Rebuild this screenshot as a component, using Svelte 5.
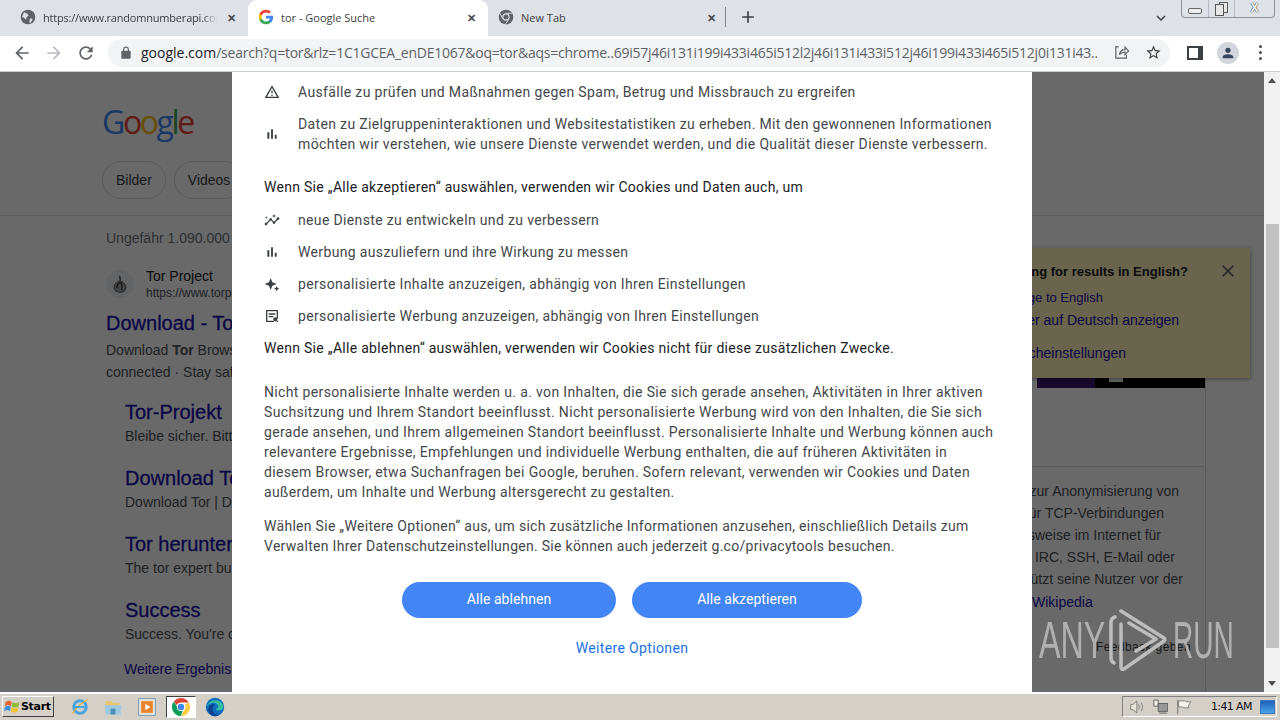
<script>
  const url = "/search?q=tor&rlz=1C1GCEA_enDE1067&oq=tor&aqs=chrome..69i57j46i131i199i433i465i512l2j46i131i433i512j46i199i433i465i512j0i131i43...";

  const moreRows = [
    { icon: "insights", text: "neue Dienste zu entwickeln und zu verbessern" },
    { icon: "bars", text: "Werbung auszuliefern und ihre Wirkung zu messen" },
    { icon: "spark", text: "personalisierte Inhalte anzuzeigen, abhängig von Ihren Einstellungen" },
    { icon: "ads", text: "personalisierte Werbung anzuzeigen, abhängig von Ihren Einstellungen" }
  ];

  const sitelinks = [
    { title: "Tor-Projekt", text: "Bleibe sicher. Bitte aktualisiere deinen Browser." },
    { title: "Download Tor", text: "Download Tor | Download for Windows" },
    { title: "Tor herunterladen", text: "The tor expert bundle for Windows" },
    { title: "Success", text: "Success. You're connected to the network." }
  ];

  // the panel text starts under the dialog, so each line is set by where it ends
  const panelLines = [
    { t: "Tor ist ein Netzwerk zur Anonymisierung von", end: 346 },
    { t: "Verbindungsdaten. Es wird für TCP-Verbindungen", end: 331 },
    { t: "eingesetzt, beispielsweise im Internet für", end: 328 },
    { t: "Browsing, Instant Messaging, IRC, SSH, E-Mail oder", end: 342 },
    { t: "P2P. Tor schützt seine Nutzer vor der", end: 350 }
  ];
</script>

{#snippet icon(name)}
  {#if name === "bars"}
    <svg class="ico" viewBox="0 0 24 24"><path d="M5 9.2h3V19H5zM10.6 5h2.8v14h-2.8zm5.6 8H19v6h-2.8z" /></svg>
  {:else if name === "warn"}
    <svg class="ico" viewBox="0 0 24 24"><path d="M1 21h22L12 2 1 21zm3.47-2L12 5.99 19.53 19H4.47zM11 16h2v2h-2zm0-6h2v4h-2z" /></svg>
  {:else if name === "insights"}
    <svg class="ico" viewBox="0 0 24 24"><path d="M21 8c-1.45 0-2.26 1.44-1.93 2.51l-3.55 3.56c-.3-.09-.74-.09-1.04 0l-2.55-2.55C12.27 10.45 11.46 9 10 9c-1.45 0-2.27 1.44-1.93 2.52l-4.56 4.55C2.44 15.74 1 16.55 1 18c0 1.1.9 2 2 2 1.45 0 2.26-1.44 1.93-2.51l4.55-4.56c.3.09.74.09 1.04 0l2.55 2.55C12.73 16.55 13.54 18 15 18c1.45 0 2.27-1.44 1.93-2.52l3.56-3.55c1.07.33 2.51-.48 2.51-1.93 0-1.1-.9-2-2-2zM15 9l.94-2.07L18 6l-2.06-.93L15 3l-.92 2.07L12 6l2.08.93zM3.5 11L4 9l2-.5L4 8l-.5-2L3 8l-2 .5L3 9z" /></svg>
  {:else if name === "spark"}
    <svg class="ico" viewBox="0 0 24 24"><path d="M10 3l2.5 6.5L19 12l-6.5 2.5L10 21l-2.5-6.5L1 12l6.5-2.5zM19 15l1.2 2.8L23 19l-2.8 1.2L19 23l-1.2-2.8L15 19l2.8-1.2z" /></svg>
  {:else}
    <svg class="ico" viewBox="0 0 24 24"><path d="M3 3h18v13h-2V5H5v14h10v2H3zM7 8h10v2H7zm0 4h7v2H7zm13.2 9.5l-2-2a3 3 0 1 1 1.3-1.3l2 2z" /></svg>
  {/if}
{/snippet}

{#snippet chrome(size)}
  <svg width={size} height={size} viewBox="0 0 24 24">
    <path fill="#db4437" d="M12 0a12 12 0 0 1 10.4 6H12a6 6 0 0 0-5.6 3.8L2.6 4.6A12 12 0 0 1 12 0z" />
    <path fill="#ffcd40" d="M22.4 6A12 12 0 0 1 12 24l4.6-8.2A6 6 0 0 0 17 8.5L22.4 6z" />
    <path fill="#0f9d58" d="M2.6 4.6l5 8.7a5 5 0 0 0 6.6 3.4L12 24A12 12 0 0 1 2.6 4.6z" />
    <circle cx="12" cy="12" r="5.4" fill="#fff" />
    <circle cx="12" cy="12" r="4.3" fill="#4285f4" />
  </svg>
{/snippet}

<div class="screen">
  <div class="tabstrip">
    <div class="tab">
      <svg class="fav" viewBox="0 0 24 24">
        <circle cx="12" cy="12" r="11" fill="#5f6368" />
        <path fill="#dee1e6" d="M6 5l5 2 2 3-3 2-1 4-3-3-3-1zM15 14l4 1-3 6-2-1z" />
      </svg>
      <span class="tab-title fade">https://www.randomnumberapi.com</span>
      <span class="tab-x">✕</span>
    </div>
    <div class="tab active">
      <svg class="fav" viewBox="0 0 24 24">
        <path fill="#4285F4" d="M22.56 12.25c0-.78-.07-1.53-.2-2.25H12v4.26h5.92c-.26 1.37-1.04 2.53-2.09 3.31v2.77h3.57c2.08-1.92 3.28-4.74 3.28-8.09z" />
        <path fill="#34A853" d="M12 23c2.97 0 5.46-.98 7.28-2.66l-3.57-2.77c-.98.66-2.23 1.06-3.71 1.06-2.86 0-5.29-1.93-6.16-4.53H2.18v2.84C3.99 20.53 7.7 23 12 23z" />
        <path fill="#FBBC05" d="M5.84 14.09c-.22-.66-.35-1.36-.35-2.09s.13-1.43.35-2.09V7.07H2.18C1.43 8.55 1 10.22 1 12s.43 3.45 1.18 4.93l2.85-2.22.81-.62z" />
        <path fill="#EA4335" d="M12 5.38c1.62 0 3.06.56 4.21 1.64l3.15-3.15C17.45 2.09 14.97 1 12 1 7.7 1 3.99 3.47 2.18 7.07l3.66 2.84c.87-2.6 3.3-4.53 6.16-4.53z" />
      </svg>
      <span class="tab-title">tor - Google Suche</span>
      <span class="tab-x">✕</span>
    </div>
    <div class="tab">
      <svg class="fav" viewBox="0 0 24 24">
        <circle cx="12" cy="12" r="11" fill="#5f6368" />
        <circle cx="12" cy="12" r="5.5" fill="#dee1e6" />
        <circle cx="12" cy="12" r="3.8" fill="#5f6368" />
        <path stroke="#dee1e6" stroke-width="1.4" d="M12 6.5h10M7 14.5L2.5 6M16.5 15L11 23" />
      </svg>
      <span class="tab-title">New Tab</span>
      <span class="tab-x">✕</span>
    </div>
    <span class="tab-sep"></span>
    <svg class="plus" viewBox="0 0 24 24"><path d="M19 13h-6v6h-2v-6H5v-2h6V5h2v6h6z" /></svg>
    <svg class="chev" viewBox="0 0 24 24"><path d="M7.41 8.59L12 13.17l4.59-4.58L18 10l-6 6-6-6z" /></svg>
    <div class="winbtns">
      <span class="wb min"><i></i></span>
      <span class="wb max"><i></i><b></b></span>
      <span class="wb close">X</span>
    </div>
  </div>

  <div class="toolbar">
    <svg class="tool" viewBox="0 0 24 24"><path d="M20 11H7.83l5.59-5.59L12 4l-8 8 8 8 1.41-1.41L7.83 13H20v-2z" /></svg>
    <svg class="tool off" viewBox="0 0 24 24"><path d="M4 11h12.17l-5.59-5.59L12 4l8 8-8 8-1.41-1.41L16.17 13H4v-2z" /></svg>
    <svg class="tool" viewBox="0 0 24 24"><path d="M17.65 6.35C16.2 4.9 14.21 4 12 4c-4.42 0-7.99 3.58-7.99 8s3.57 8 7.99 8c3.73 0 6.84-2.55 7.73-6h-2.08c-.82 2.33-3.04 4-5.65 4-3.31 0-6-2.69-6-6s2.69-6 6-6c1.66 0 3.14.69 4.22 1.78L13 11h7V4l-2.35 2.35z" /></svg>
    <div class="omnibox">
      <svg class="lock" viewBox="0 0 24 24"><path d="M18 8h-1V6c0-2.76-2.24-5-5-5S7 3.24 7 6v2H6c-1.1 0-2 .9-2 2v10c0 1.1.9 2 2 2h12c1.1 0 2-.9 2-2V10c0-1.1-.9-2-2-2zM9 6c0-1.66 1.34-3 3-3s3 1.34 3 3v2H9V6z" /></svg>
      <span class="url"><span class="host">google.com</span>{url}</span>
      <svg class="omni-ico share" viewBox="0 0 24 24"><path fill="none" stroke="#5f6368" stroke-width="1.7" d="M8 4H4v16h15v-5M9 15c1-5 4-7 8-7V4.5l5 5.5-5 5v-3.500c-3 0-6 1-8 3.500z" /></svg>
      <svg class="omni-ico star" viewBox="0 0 24 24"><path d="M22 9.24l-7.19-.62L12 2 9.19 8.63 2 9.24l5.46 4.73L5.82 21 12 17.27 18.18 21l-1.63-7.03L22 9.24zM12 15.4l-3.76 2.27 1-4.28-3.32-2.88 4.38-.38L12 6.1l1.71 4.04 4.38.38-3.32 2.88 1 4.28L12 15.4z" /></svg>
    </div>
    <span class="sidepanel"></span>
    <span class="avatar">
      <svg viewBox="0 0 24 24"><path d="M12 12a4 4 0 1 0 0-8 4 4 0 0 0 0 8zm0 2c-3 0-8 1.300-8 4v2h16v-2c0-2.700-5-4-8-4z" /></svg>
    </span>
    <span class="dots"><i></i><i></i><i></i></span>
  </div>

  <div class="page">
    <div class="doc">
      <header class="search-head">
        <div class="logo"><span class="b">G</span><span class="r">o</span><span class="y">o</span><span class="b">g</span><span class="g">l</span><span class="r">e</span></div>
        <nav class="chips">
          <span class="chip">Bilder</span>
          <span class="chip">Videos</span>
        </nav>
      </header>
      <div class="serp">
        <main class="results">
          <p class="count">Ungefähr 1.090.000 Ergebnisse</p>
          <div class="site">
            <span class="site-ico">
              <svg viewBox="0 0 24 24">
                <path fill="#a8a8a8" stroke="#333" d="M12 8c5 2 7 5 7 8 0 4-3 6-7 6s-7-2-7-6c0-3 2-6 7-8z" />
                <path fill="none" stroke="#333" stroke-width="1.500" d="M12 2c-1 2 1 3 0 6M12 10c-3 2-4 4-4 7M12 10c3 2 3 5 2 9" />
              </svg>
            </span>
            <div>
              <div class="site-name">Tor Project</div>
              <div class="site-url">https://www.torproject.org › download</div>
            </div>
          </div>
          <a class="title" href="#top">Download - Tor Project</a>
          <p class="desc">Download <b>Tor</b> Browser to experience real private browsing without tracking.<br />connected · Stay safe and private online with us.</p>
          <ul class="sitelinks">
            {#each sitelinks as s}
              <li>
                <a class="sl-title" href="#top">{s.title}</a>
                <div class="sl-text">{s.text}</div>
              </li>
            {/each}
          </ul>
          <a class="more" href="#top">Weitere Ergebnisse von torproject.org</a>
        </main>

        <aside class="panel">
          <div class="panel-img"><i></i><u></u></div>
          <div class="panel-gap"></div>
          <div class="panel-text">
            {#each panelLines as line}
              <div class="pline" style="width:{line.end}px">{line.t}</div>
            {/each}
            <a class="wiki" href="#top">Wikipedia</a>
          </div>
          <div class="feedback">Feedback geben</div>
        </aside>
      </div>

      <div class="lang-note">
        <div class="ln ln-head">Searching for results in English?</div>
        <div class="ln ln-a">Change to English</div>
        <div class="ln ln-b">Immer auf Deutsch anzeigen</div>
        <div class="ln ln-c">Spracheinstellungen</div>
        <svg class="ln-x" viewBox="0 0 24 24"><path d="M19 6.41L17.59 5 12 10.59 6.41 5 5 6.41 10.59 12 5 17.59 6.41 19 12 13.41 17.59 19 19 17.590 13.41 12z" /></svg>
      </div>

      <div class="scrim"></div>

      <div class="dialog">
        <div class="row">
          {@render icon("warn")}
          <span>Ausfälle zu prüfen und Maßnahmen gegen Spam, Betrug und Missbrauch zu ergreifen</span>
        </div>
        <div class="row">
          {@render icon("bars")}
          <span>Daten zu Zielgruppeninteraktionen und Websitestatistiken zu erheben. Mit den gewonnenen Informationen möchten wir verstehen, wie unsere Dienste verwendet werden, und die Qualität dieser Dienste verbessern.</span>
        </div>
        <p class="lead first">Wenn Sie „Alle akzeptieren“ auswählen, verwenden wir Cookies und Daten auch, um</p>
        {#each moreRows as r}
          <div class="row">
            {@render icon(r.icon)}
            <span>{r.text}</span>
          </div>
        {/each}
        <p class="lead">Wenn Sie „Alle ablehnen“ auswählen, verwenden wir Cookies nicht für diese zusätzlichen Zwecke.</p>
        <p class="para top">Nicht personalisierte Inhalte werden u. a. von Inhalten, die Sie sich gerade ansehen, Aktivitäten in Ihrer aktiven Suchsitzung und Ihrem Standort beeinflusst. Nicht personalisierte Werbung wird von den Inhalten, die Sie sich gerade ansehen, und Ihrem allgemeinen Standort beeinflusst. Personalisierte Inhalte und Werbung können auch relevantere Ergebnisse, Empfehlungen und individuelle Werbung enthalten, die auf früheren Aktivitäten in diesem Browser, etwa Suchanfragen bei Google, beruhen. Sofern relevant, verwenden wir Cookies und Daten außerdem, um Inhalte und Werbung altersgerecht zu gestalten.</p>
        <p class="para last">Wählen Sie „Weitere Optionen“ aus, um sich zusätzliche Informationen anzusehen, einschließlich Details zum Verwalten Ihrer Datenschutzeinstellungen. Sie können auch jederzeit g.co/privacytools besuchen.</p>
        <div class="actions">
          <button class="reject">Alle ablehnen</button>
          <button class="accept">Alle akzeptieren</button>
        </div>
        <a class="options" href="#top">Weitere Optionen</a>
      </div>

      <div class="watermark">
        <span class="wm-text">ANY</span>
        <svg class="wm-play" viewBox="0 0 58 62">
          <path fill="none" stroke="#bdbdbd" stroke-width="3.500" stroke-linejoin="round" stroke-linecap="round" d="M6 8C3 9 2 10 2 13v36c0 3 1 4 3 5M12 2l43 27c1 1 1 2 0 3L15 60c-2 1-3 0-3-2V15M20 14l27 16-20 12" />
        </svg>
        <span class="wm-text run">RUN</span>
      </div>
    </div>

    <div class="scrollbar">
      <span class="arr up"></span>
      <span class="thumb"></span>
      <span class="arr down"></span>
    </div>
  </div>

  <div class="taskbar">
    <button class="start">
      <svg viewBox="0 0 20 18" width="17" height="16">
        <path fill="#e8622c" d="M2 3c3-2 5-2 7 0L8 8C6 6 4 6 1 8z" />
        <path fill="#8dbb35" d="M10 3c3 2 5 2 8 0l-1 5c-3 2-5 2-8 0z" />
        <path fill="#3a8fd8" d="M1 9c3-2 5-2 7 0l-1 5c-2-2-4-2-7 0z" />
        <path fill="#f4c430" d="M9 9c3 2 5 2 8 0l-1 5c-3 2-5 2-8 0z" />
      </svg>
      Start
    </button>
    <div class="quick">
      <svg class="tb-ico" viewBox="0 0 24 24">
        <circle cx="12" cy="12" r="7.500" fill="none" stroke="#4aa3df" stroke-width="3.500" />
        <path fill="none" stroke="#e8b13a" stroke-width="1.500" d="M3 20C6 14 14 6 22 3" />
        <path stroke="#4aa3df" stroke-width="2.500" d="M6 12h13" />
      </svg>
      <svg class="tb-ico" viewBox="0 0 24 24">
        <path fill="#e7c66e" d="M3 5h7l2 2h8v4H3z" />
        <path fill="#9cc9e0" d="M2 10h20l-1 11H3z" />
        <path fill="#4d8fb5" d="M9 14h6v7H9z" />
      </svg>
      <svg class="tb-ico media" viewBox="0 0 24 24">
        <rect x="2" y="2" width="20" height="20" fill="#e8e4da" stroke="#6b8fb5" />
        <rect x="5" y="5" width="14" height="14" fill="#e8842c" />
        <path fill="#fff" d="M10 8l6 4-6 4z" />
      </svg>
      <span class="tb-active">{@render chrome(18)}</span>
      <svg class="tb-ico" viewBox="0 0 24 24">
        <circle cx="12" cy="12" r="11" fill="#0f6cbd" />
        <path fill="#35c1a0" d="M2 14c0-6 5-10 10-10 6 0 10 4 10 8 0 3-3 4-6 4-2 0-3-1-3-2 2 0 3-1 3-2 0-3-3-5-6-5-4 0-8 3-8 7z" />
        <path fill="#0b3f8a" d="M12 23c-5 0-8-4-8-8 0-4 4-7 8-6-2 1-3 3-3 6 0 4 3 7 9 6-2 1-4 2-6 2z" />
      </svg>
    </div>
    <div class="tray">
      <svg class="tray-ico" viewBox="0 0 18 16"><path fill="#e8e4da" stroke="#777" d="M2 5h3l4-4v14l-4-4H2z" /><path fill="none" stroke="#777" d="M11 5c1 2 1 4 0 6M14 3c2 3 2 7 0 10" /></svg>
      <svg class="tray-ico" viewBox="0 0 18 16"><path fill="#f2efe6" stroke="#555" d="M1 0h5v7H1z" /><path fill="#999" stroke="#555" d="M6 4h11v9H6z" /><path stroke="#555" d="M7 15h9" /></svg>
      <svg class="tray-ico" viewBox="0 0 18 16"><path stroke="#666" d="M2 0v16" /><path fill="#f5f3ea" stroke="#777" d="M3 1h7l2 1h5l-3 5 1 2H9L8 8H3z" /></svg>
      <span class="clock">1:41 AM</span>
      <span class="desk"></span>
    </div>
  </div>
</div>

<style>
  :global(body) {
    margin: 0;
    overflow: hidden;
  }
  .screen {
    width: 1280px;
    height: 720px;
    display: flex;
    flex-direction: column;
    overflow: hidden;
    font-family: "Liberation Sans", Arial, sans-serif;
  }

  /* tabs */
  .tabstrip {
    height: 36px;
    background: #dee1e6;
    display: flex;
    align-items: center;
    padding-left: 8px;
    position: relative;
    font-family: "Open Sans", sans-serif;
    font-size: 11px;
    color: #3c4043;
  }
  .tab {
    width: 240px;
    height: 36px;
    box-sizing: border-box;
    display: flex;
    align-items: center;
    padding: 0 9px 2px 10px;
    border-radius: 9px 9px 0 0;
  }
  .tab:first-child {
    padding-left: 12px;
  }
  .tab.active {
    background: #fff;
    color: #3c4043;
  }
  .fav {
    width: 16px;
    height: 16px;
    flex: none;
    margin-right: 7px;
  }
  .tab-title {
    flex: 1;
    white-space: nowrap;
    overflow: hidden;
  }
  .fade {
    letter-spacing: -0.2px;
    mask-image: linear-gradient(to left, transparent, #000 14px);
  }
  .tab-x {
    width: 16px;
    text-align: center;
    font-size: 11px;
    font-weight: 700;
    color: #45484c;
    margin-left: 6px;
  }
  .tab-sep {
    width: 1px;
    height: 20px;
    background: #80868b;
    margin-left: -3px;
    margin-top: -2px;
  }
  .plus {
    width: 20px;
    height: 20px;
    fill: #3c4043;
    margin-left: 12px;
    margin-top: -2px;
  }
  .chev {
    width: 18px;
    height: 18px;
    fill: #3c4043;
    margin-left: auto;
    margin-right: 110px;
  }
  .winbtns {
    position: absolute;
    top: 0;
    right: 5px;
    display: flex;
    height: 17px;
    border: 1px solid #8b8f96;
    border-top: none;
    border-radius: 0 0 4px 4px;
    background: #dee1e6;
  }
  .wb {
    position: relative;
    display: block;
    height: 17px;
    text-align: center;
    color: #f4f4f4;
    font: 700 12px "Liberation Sans", sans-serif;
    text-shadow: 0 0 1px #333, 0 0 1px #333;
    line-height: 16px;
  }
  .min {
    width: 26px;
    border-right: 1px solid #b6bac0;
  }
  .min i {
    position: absolute;
    left: 6px;
    top: 8px;
    width: 12px;
    height: 4px;
    border: 1px solid #666;
    border-radius: 2px;
    background: #eee;
  }
  .max {
    width: 25px;
    border-right: 1px solid #b6bac0;
  }
  .max i,
  .max b {
    position: absolute;
    border: 1px solid #555;
    background: #e6e6e6;
    display: block;
  }
  .max i {
    left: 10px;
    top: 2px;
    width: 7px;
    height: 9px;
  }
  .max b {
    left: 6px;
    top: 4px;
    width: 7px;
    height: 10px;
  }
  .close {
    width: 39px;
  }

  /* address row */
  .toolbar {
    height: 36px;
    box-sizing: border-box;
    background: #fff;
    border-bottom: 1px solid #c9cbcf;
    display: flex;
    align-items: center;
    padding: 0 0 2px 12px;
  }
  .tool {
    width: 20px;
    height: 20px;
    fill: #5f6368;
    margin-right: 12px;
  }
  .tool.off {
    fill: #b9bcc0;
  }
  .omnibox {
    width: 1062px;
    height: 28px;
    border-radius: 14px;
    background: #f1f3f4;
    display: flex;
    align-items: center;
    box-sizing: border-box;
    padding-left: 11px;
    font-family: "Open Sans", sans-serif;
    font-size: 14px;
    color: #5f6368;
  }
  .lock {
    width: 14px;
    height: 14px;
    fill: #5f6368;
    margin-right: 8px;
    flex: none;
  }
  .url {
    width: 956px;
    flex: none;
    white-space: nowrap;
    overflow: hidden;
    letter-spacing: -0.24px;
  }
  .host {
    color: #202124;
    letter-spacing: 0;
  }
  .omni-ico {
    width: 17px;
    height: 17px;
    flex: none;
  }
  .share {
    margin-left: 16px;
  }
  .star {
    margin-left: 15px;
    fill: #3c4043;
  }
  .sidepanel {
    width: 9px;
    height: 10px;
    border: 2px solid #3c4043;
    border-right-width: 5px;
    margin-left: 17px;
  }
  .avatar {
    width: 22px;
    height: 22px;
    border-radius: 50%;
    background: #d3d7dd;
    margin-left: 14px;
    overflow: hidden;
    display: flex;
    align-items: center;
    justify-content: center;
  }
  .avatar svg {
    width: 16px;
    height: 16px;
    fill: #35465e;
  }
  .dots {
    display: flex;
    flex-direction: column;
    gap: 3px;
    margin-left: 20px;
  }
  .dots i {
    width: 3px;
    height: 3px;
    border-radius: 50%;
    background: #4a4d51;
  }

  /* page under the dialog */
  .page {
    flex: 1;
    min-height: 0;
    display: flex;
  }
  .doc {
    flex: 1;
    position: relative;
    overflow: hidden;
    background: #fff;
    color: #202124;
  }
  .search-head {
    height: 144px;
    box-sizing: border-box;
    padding: 28px 0 0 102px;
    border-bottom: 1px solid #dfe1e5;
  }
  .logo {
    font: 400 32px/44px "Open Sans", sans-serif;
    letter-spacing: -2.4px;
    height: 44px;
  }
  .b { color: #4285f4; }
  .r { color: #ea4335; }
  .y { color: #fbbc05; }
  .g { color: #34a853; }
  .chips {
    display: flex;
    gap: 8px;
    margin-top: 17px;
  }
  .chip {
    height: 38px;
    box-sizing: border-box;
    padding: 0 13px;
    border: 1px solid #dadce0;
    border-radius: 19px;
    font-size: 14px;
    line-height: 36px;
    color: #3c4043;
  }
  .serp {
    display: flex;
    align-items: flex-start;
  }
  .results {
    width: 640px;
    flex: none;
    padding-left: 106px;
    box-sizing: content-box;
  }
  .count {
    margin: 13px 0 0;
    font-size: 14px;
    line-height: 18px;
    color: #70757a;
    white-space: nowrap;
  }
  .site {
    display: flex;
    align-items: center;
    gap: 12px;
    margin-top: 21px;
    height: 32px;
    font-size: 14px;
  }
  .site-ico {
    width: 28px;
    height: 28px;
    border-radius: 50%;
    background: #f1f3f4;
    display: flex;
    align-items: center;
    justify-content: center;
  }
  .site-ico svg {
    width: 20px;
    height: 20px;
  }
  .site-name {
    line-height: 18px;
  }
  .site-url {
    font-size: 12px;
    line-height: 16px;
    color: #4d5156;
    white-space: nowrap;
  }
  .title {
    display: block;
    margin-top: 10px;
    font-size: 20px;
    line-height: 26px;
    color: #1a0dab;
    text-decoration: none;
    white-space: nowrap;
    -webkit-text-stroke: 0.3px #1a0dab;
  }
  .desc {
    margin: 3px 0 0;
    font-size: 14px;
    line-height: 22px;
    color: #4d5156;
    white-space: nowrap;
  }
  .sitelinks {
    list-style: none;
    margin: 16px 0 0;
    padding: 0 0 0 19px;
  }
  .sitelinks li {
    height: 66px;
  }
  .sl-title {
    display: block;
    font-size: 20px;
    line-height: 26px;
    color: #1a0dab;
    text-decoration: none;
    white-space: nowrap;
    -webkit-text-stroke: 0.3px #1a0dab;
  }
  .sl-text {
    font-size: 14px;
    line-height: 22px;
    color: #4d5156;
    white-space: nowrap;
  }
  .more {
    display: block;
    margin: -4px 0 0 18px;
    font-size: 14px;
    line-height: 20px;
    color: #1a0dab;
    text-decoration: none;
    white-space: nowrap;
  }
  .panel {
    width: 372px;
    margin-left: 87px;
    height: 476px;
    margin-top: 32px;
    border-right: 1px solid #dadce0;
    flex: none;
    position: relative;
    box-sizing: content-box;
  }
  .panel-img {
    height: 140px;
    width: 168px;
    margin-left: auto;
    display: flex;
    background: #000;
    position: relative;
  }
  .panel-img i {
    width: 58px;
    background: #3a1470;
  }
  .panel-img u {
    position: absolute;
    left: 72px;
    bottom: 6px;
    width: 14px;
    height: 4px;
    background: #f4f4f4;
  }
  .panel-gap {
    height: 78px;
    border-bottom: 1px solid #dadce0;
  }
  .panel-text {
    padding-top: 13px;
    font-size: 14px;
    line-height: 22px;
    color: #4d5156;
  }
  .pline {
    text-align: right;
    white-space: nowrap;
  }
  .wiki {
    display: block;
    margin: 1px 0 0 199px;
    color: #1a0dab;
    text-decoration: none;
  }
  .feedback {
    position: absolute;
    right: 14px;
    top: 392px;
    font-size: 12px;
    letter-spacing: 0.4px;
    color: #3c4043;
    white-space: nowrap;
  }

  /* yellow language note sits on top of the panel */
  .lang-note {
    position: absolute;
    left: 880px;
    top: 176px;
    width: 370px;
    height: 130px;
    background: #fff4b8;
    box-shadow: 0 1px 4px rgba(0, 0, 0, 0.4);
    font-size: 14px;
    color: #1a0dab;
  }
  .ln {
    position: absolute;
    right: 0;
    white-space: nowrap;
  }
  .ln-head {
    top: 16px;
    right: 62px;
    font-size: 13px;
    font-weight: 700;
    color: #202124;
  }
  .ln-a {
    top: 42px;
    right: 147px;
    font-size: 13px;
  }
  .ln-b {
    top: 64px;
    right: 71px;
  }
  .ln-c {
    top: 97px;
    right: 124px;
  }
  .ln-x {
    position: absolute;
    right: 12px;
    top: 13px;
    width: 20px;
    height: 20px;
    fill: #5f6368;
  }

  .scrim {
    position: absolute;
    inset: 0;
    background: rgba(0, 0, 0, 0.59);
  }

  /* consent dialog */
  .dialog {
    position: absolute;
    left: 232px;
    top: 0;
    width: 800px;
    height: 620px;
    box-sizing: border-box;
    padding: 10px 32px 0;
    background: #fff;
    font-family: Roboto, sans-serif;
    font-size: 14px;
    line-height: 20px;
    letter-spacing: 0.35px;
    color: #44474a;
  }
  .row {
    display: flex;
    align-items: center;
    gap: 18px;
    margin-bottom: 12px;
  }
  .ico {
    width: 16px;
    height: 16px;
    flex: none;
    fill: #3c4043;
  }
  .lead {
    margin: 0 0 13px;
    color: #202124;
    letter-spacing: 0.29px;
  }
  .lead.first {
    margin-top: 23px;
  }
  .para {
    margin: 0 0 14px;
    padding-right: 4px;
  }
  .para.top {
    margin-top: 24px;
  }
  .para.last {
    letter-spacing: 0.29px;
  }
  .actions {
    display: flex;
    justify-content: center;
    gap: 16px;
    margin-top: 26px;
  }
  .actions button {
    height: 36px;
    border: none;
    border-radius: 18px;
    background: #4285f4;
    color: #fff;
    font: inherit;
    letter-spacing: 0.05px;
    padding: 0 0 2px;
  }
  .reject {
    width: 214px;
  }
  .accept {
    width: 230px;
  }
  .options {
    display: block;
    margin-top: 20px;
    text-align: center;
    color: #1a73e8;
    text-decoration: none;
  }

  /* sandbox watermark */
  .watermark {
    position: absolute;
    left: 1039px;
    top: 537px;
    display: flex;
    align-items: center;
    color: rgba(200, 200, 200, 0.75);
  }
  .wm-text {
    font: 400 52px/60px "Liberation Sans", sans-serif;
    display: block;
    width: 62px;
    transform: scaleX(0.62);
    transform-origin: left center;
    white-space: nowrap;
  }
  .wm-text.run {
    transform: scaleX(0.54);
  }
  .wm-play {
    width: 58px;
    height: 62px;
    margin: 0 6px 0 8px;
  }

  /* scrollbar */
  .scrollbar {
    width: 16px;
    background: #f1f1f1;
    position: relative;
  }
  .thumb {
    position: absolute;
    left: 2px;
    right: 1px;
    top: 152px;
    height: 424px;
    background: #c1c1c1;
  }
  .arr {
    position: absolute;
    left: 4px;
    width: 0;
    height: 0;
    border: 4px solid transparent;
  }
  .up {
    top: 2px;
    border-bottom: 5px solid #505050;
  }
  .down {
    bottom: 2px;
    border-top: 5px solid #505050;
  }

  /* windows taskbar */
  .taskbar {
    height: 28px;
    box-sizing: border-box;
    border-top: 1px solid #fff;
    background: #d4d0c8;
    display: flex;
    align-items: center;
    padding-left: 2px;
    box-shadow: inset 0 1px 0 #fff;
  }
  .start {
    width: 52px;
    height: 21px;
    padding: 0 0 0 1px;
    display: flex;
    align-items: center;
    gap: 0;
    background: #d4d0c8;
    border: 1px solid;
    border-color: #fff #404040 #404040 #fff;
    font: 700 11px "DejaVu Sans", sans-serif;
    letter-spacing: -0.3px;
    color: #000;
  }
  .quick {
    display: flex;
    align-items: center;
    margin-left: 16px;
  }
  .tb-ico {
    width: 20px;
    height: 20px;
    margin-right: 13px;
  }
  .tb-ico.media {
    margin-left: 1px;
  }
  .tb-active {
    width: 30px;
    height: 22px;
    margin: 0 9px 0 -4px;
    background: #fff;
    border: 1px solid;
    border-color: #404040 #fff #fff #404040;
    box-sizing: border-box;
    display: flex;
    align-items: center;
    justify-content: center;
  }
  .tray {
    margin-left: auto;
    margin-right: 3px;
    width: 155px;
    height: 21px;
    box-sizing: border-box;
    border: 1px solid;
    border-color: #808080 #fff #fff #808080;
    display: flex;
    align-items: center;
    padding-left: 6px;
    gap: 8px;
  }
  .tray-ico {
    width: 18px;
    height: 16px;
  }
  .clock {
    margin-left: 11px;
    font: 11px "DejaVu Sans", sans-serif;
    letter-spacing: -0.6px;
    white-space: nowrap;
    color: #111;
  }
  .desk {
    width: 15px;
    height: 12px;
    margin-left: auto;
    margin-right: 1px;
    background: linear-gradient(#1e5fb8, #4aa3e8);
    border: 1px solid #3a78c0;
  }
</style>
